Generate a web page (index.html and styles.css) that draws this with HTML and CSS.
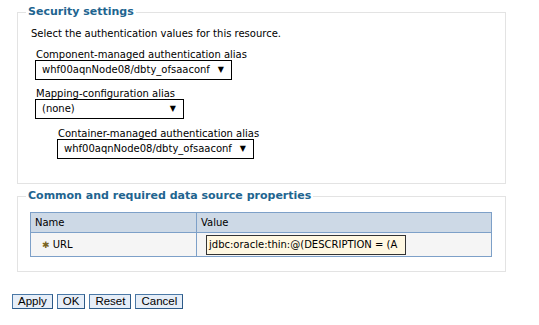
FILE: index.html
```html
<!DOCTYPE html>
<html lang="en">
<head>
    <meta charset="UTF-8">
    <title>Data source properties</title>
    <link rel="stylesheet" href="styles.css">
</head>
<body>
    <fieldset class="group security">
        <legend>Security settings</legend>
        <p class="intro">Select the authentication values for this resource.</p>
        <div class="field">
            <label>Component-managed authentication alias</label>
            <div class="select wide"><span>whf00aqnNode08/dbty_ofsaaconf</span><span class="arrow">&#9660;</span></div>
        </div>
        <div class="field">
            <label>Mapping-configuration alias</label>
            <div class="select narrow"><span>(none)</span><span class="arrow">&#9660;</span></div>
        </div>
        <div class="field nested">
            <label>Container-managed authentication alias</label>
            <div class="select wide"><span>whf00aqnNode08/dbty_ofsaaconf</span><span class="arrow">&#9660;</span></div>
        </div>
    </fieldset>

    <fieldset class="group props">
        <legend>Common and required data source properties</legend>
        <table class="prop-table">
            <colgroup>
                <col class="col-name">
                <col>
            </colgroup>
            <tr>
                <th>Name</th>
                <th>Value</th>
            </tr>
            <tr>
                <td class="name-cell"><span class="req">&#10033;</span> URL</td>
                <td class="value-cell"><div class="text-input">jdbc:oracle:thin:@(DESCRIPTION = (A</div></td>
            </tr>
        </table>
    </fieldset>

    <div class="button-bar">
        <button>Apply</button>
        <button>OK</button>
        <button>Reset</button>
        <button>Cancel</button>
    </div>
</body>
</html>
```

FILE: styles.css
```css
body {
    font-family: "DejaVu Sans", sans-serif;
    font-size: 10px;
    line-height: 12px;
    color: #000;
    background-color: #fff;
    margin: 0;
    padding: 4px 0 0 17px;
}
.group {
    width: 489px;
    margin: 0;
    padding: 0 12px;
    border: 1px solid #e3e3e3;
    box-sizing: border-box;
}
.group legend {
    font-size: 11px;
    line-height: 16px;
    font-weight: bold;
    color: #21648f;
    padding: 0 2px;
    margin-left: -4px;
}
.security {
    height: 180px;
}
.intro {
    margin: 8px 0 0 1px;
}
.field {
    margin-top: 9px;
}
.field + .field {
    margin-top: 8px;
}
.field label {
    display: block;
    line-height: 11px;
    margin-left: 6px;
}
.field.nested {
    margin-top: 9px;
    margin-left: 22px;
}
.select {
    display: flex;
    justify-content: space-between;
    align-items: center;
    height: 20px;
    padding: 0 7px 0 6px;
    margin-left: 5px;
    border: 1px solid #000;
    box-sizing: border-box;
}
.select.wide {
    width: 197px;
}
.select.narrow {
    width: 149px;
}
.arrow {
    font-size: 8px;
}
.props {
    margin-top: 4px;
    height: 84px;
}
.prop-table {
    width: 462px;
    margin-top: 8px;
    table-layout: fixed;
    border-collapse: collapse;
    border: 1px solid #7da0c8;
}
.col-name {
    width: 166px;
}
.prop-table th {
    background-color: #cdd9e6;
    font-weight: normal;
    text-align: left;
    height: 19px;
    padding: 0 4px;
    border: 1px solid #7da0c8;
}
.prop-table td {
    background-color: #f5f5f5;
    height: 23px;
    padding: 0 4px;
    border: 1px solid #7da0c8;
}
.name-cell {
    padding-left: 11px !important;
}
.value-cell {
    padding-left: 9px !important;
}
.req {
    color: #7a6420;
    font-size: 9px;
}
.text-input {
    width: 200px;
    height: 20px;
    line-height: 18px;
    padding: 0 2px;
    border: 1px solid #333;
    background-color: #fff8e2;
    box-sizing: border-box;
    overflow: hidden;
    white-space: nowrap;
}
.button-bar {
    display: flex;
    gap: 4px;
    margin: 22px 0 0 -5px;
}
.button-bar button {
    font-family: "Liberation Sans", Arial, sans-serif;
    font-size: 11.5px;
    line-height: 13px;
    height: 15px;
    padding: 0 5px;
    background-color: #e6eef8;
    border: 1px solid #4a78a6;
    border-right-color: #2c5a88;
    border-bottom-color: #2c5a88;
    border-radius: 0;
}
```
